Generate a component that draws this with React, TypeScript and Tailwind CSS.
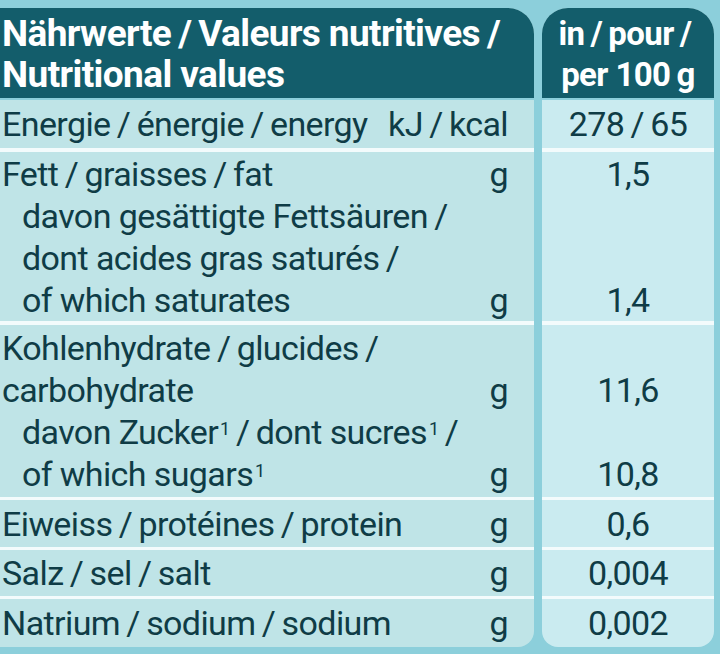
import React from "react";

type Line = { label: React.ReactNode; indent?: boolean; unit?: string; value?: string };
type Row = { h: string; lines: Line[] };

// thin spaces round the slashes, like the printed label
const s = "\u2009/\u2009";

const Sup = () => <sup className="text-[18px] ml-[2px]">1</sup>;

const rows: Row[] = [
  { h: "h-[48px]", lines: [{ label: `Energie${s}énergie${s}energy`, unit: `kJ${s}kcal`, value: `278${s}65` }] },
  {
    h: "h-[169px]",
    lines: [
      { label: `Fett${s}graisses${s}fat`, unit: "g", value: "1,5" },
      { label: `davon gesättigte Fettsäuren${s}`, indent: true },
      { label: `dont acides gras saturés${s}`, indent: true },
      { label: "of which saturates", indent: true, unit: "g", value: "1,4" },
    ],
  },
  {
    h: "h-[172px]",
    lines: [
      { label: `Kohlenhydrate${s}glucides${s}` },
      { label: "carbohydrate", unit: "g", value: "11,6" },
      {
        label: (
          <>
            davon Zucker<Sup />{s}dont sucres<Sup />{s}
          </>
        ),
        indent: true,
      },
      {
        label: (
          <>
            of which sugars<Sup />
          </>
        ),
        indent: true,
        unit: "g",
        value: "10,8",
      },
    ],
  },
  { h: "h-[47px]", lines: [{ label: `Eiweiss${s}protéines${s}protein`, unit: "g", value: "0,6" }] },
  { h: "h-[46px]", lines: [{ label: `Salz${s}sel${s}salt`, unit: "g", value: "0,004" }] },
  { h: "h-[48px]", lines: [{ label: `Natrium${s}sodium${s}sodium`, unit: "g", value: "0,002" }] },
];

const seps = ["h-[4px]", "h-[4px]", "h-[3px]", "h-[3px]", "h-[3px]"];

export default function App() {
  return (
    <div
      className="w-[720px] h-[654px] bg-[#8ccfdb] flex gap-[8px] pt-[8px] pb-[7px] pr-[6px] text-[#0f3c46] text-[34px] tracking-[-0.6px]"
      style={{ fontFamily: "Roboto, 'Liberation Sans', sans-serif" }}
    >
      {/* left panel */}
      <div className="w-[534px] flex flex-col rounded-tr-[26px] rounded-br-[16px] overflow-hidden bg-[#bfe4e7]">
        <div className="h-[90px] bg-[#135d6b] text-white font-bold text-[37px] leading-[41px] pl-[2px] pt-[5px]">
          <div>Nährwerte{s}Valeurs nutritives{s}</div>
          <div>Nutritional values</div>
        </div>
        <div className="h-[2px] bg-[#8ccfdb]" />
        {rows.map((r, i) => (
          <React.Fragment key={i}>
            <div className={`${r.h} flex flex-col justify-center pr-[26px]`}>
              {r.lines.map((l, j) => (
                <div key={j} className={`flex justify-between leading-[42px] ${l.indent ? "pl-[22px]" : "pl-[2px]"}`}>
                  <span>{l.label}</span>
                  <span>{l.unit}</span>
                </div>
              ))}
            </div>
            {i < seps.length && <div className={`${seps[i]} bg-[#f3fbfc]`} />}
          </React.Fragment>
        ))}
      </div>
      {/* right panel */}
      <div className="flex-1 flex flex-col rounded-t-[26px] rounded-b-[16px] overflow-hidden bg-[#caebf0]">
        <div className="h-[90px] bg-[#135d6b] text-white font-bold text-[33px] leading-[41px] pt-[5px] text-center">
          <div>in{s}pour{s}</div>
          <div>per 100{"\u2009"}g</div>
        </div>
        <div className="h-[2px] bg-[#8ccfdb]" />
        {rows.map((r, i) => (
          <React.Fragment key={i}>
            <div className={`${r.h} flex flex-col justify-center`}>
              {r.lines.map((l, j) => (
                <div key={j} className="leading-[42px] h-[42px] text-center">
                  {l.value}
                </div>
              ))}
            </div>
            {i < seps.length && <div className={`${seps[i]} bg-[#f3fbfc]`} />}
          </React.Fragment>
        ))}
      </div>
    </div>
  );
}
